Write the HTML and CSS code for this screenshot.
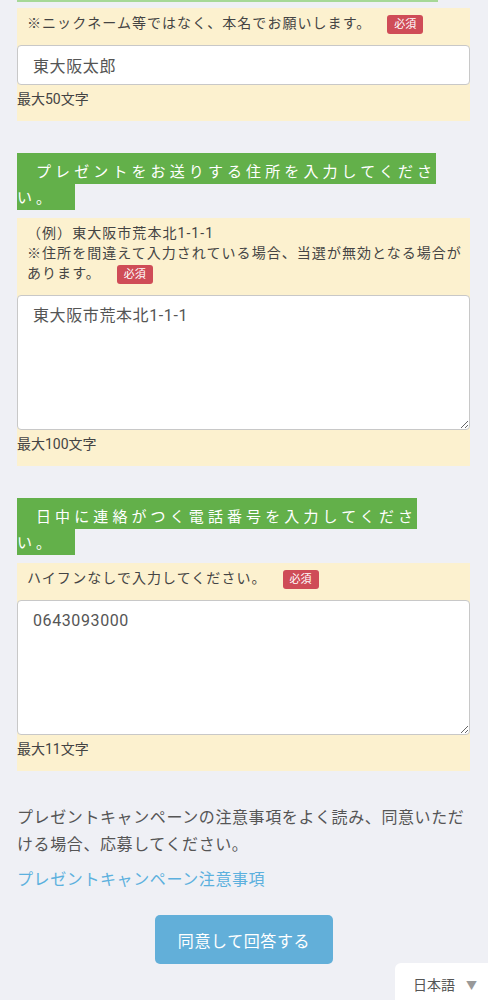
FILE: index.html
```html
<!DOCTYPE html>
<html lang="ja">
<head>
<meta charset="utf-8">
<title>応募フォーム</title>
<link rel="stylesheet" href="styles.css">
</head>
<body>
<div class="page">
  <div class="top-rule"></div>

  <div class="field">
    <p class="label">※ニックネーム等ではなく、本名でお願いします。<span class="badge">必須</span></p>
    <input class="input" type="text" value="東大阪太郎">
    <p class="hint">最大50文字</p>
  </div>

  <h2 class="heading"><span>プレゼントをお送りする住所を入力してください。</span></h2>
  <div class="field">
    <p class="label">（例）東大阪市荒本北1-1-1<br>※住所を間違えて入力されている場合、当選が無効となる場合があります。<span class="badge">必須</span></p>
    <textarea class="area">東大阪市荒本北1-1-1</textarea>
    <p class="hint">最大100文字</p>
  </div>

  <h2 class="heading"><span>日中に連絡がつく電話番号を入力してください。</span></h2>
  <div class="field">
    <p class="label">ハイフンなしで入力してください。<span class="badge">必須</span></p>
    <textarea class="area">0643093000</textarea>
    <p class="hint">最大11文字</p>
  </div>

  <p class="notice">プレゼントキャンペーンの注意事項をよく読み、同意いただける場合、応募してください。</p>
  <p class="link-row"><a class="link" href="#">プレゼントキャンペーン注意事項</a></p>
  <div class="actions"><button class="submit" type="button">同意して回答する</button></div>
</div>

<div class="lang">日本語<span class="caret">▼</span></div>
</body>
</html>
```

FILE: styles.css
```css
html, body {
  margin: 0;
  padding: 0;
  background: #eff0f5;
}
body {
  font-family: "Roboto", "Noto Sans CJK JP", sans-serif;
  color: #555;
}
.page {
  padding: 0 18px 60px 17px;
}
.top-rule {
  width: 421px;
  height: 2px;
  background: #a6d897;
  margin-bottom: 6px;
}
.field {
  background: #fcf1cf;
  padding-bottom: 12px;
}
.label {
  margin: 0;
  padding: 5px 2px 11px 10px;
  font-size: 14px;
  line-height: 20px;
  letter-spacing: 1.05px;
  color: #444;
}
.badge {
  display: inline-block;
  margin-left: 16px;
  padding: 0 7px;
  height: 19px;
  line-height: 19px;
  font-size: 11px;
  letter-spacing: 0;
  color: #fff;
  background: #cf4c57;
  border-radius: 3px;
  vertical-align: 0;
}
.input, .area {
  display: block;
  box-sizing: border-box;
  width: 100%;
  margin: 0;
  border: 1px solid #c8c8c8;
  border-radius: 4px;
  background: #fff;
  font-family: "Roboto", "Noto Sans CJK JP", sans-serif;
  font-size: 16px;
  letter-spacing: 0.6px;
  color: #555;
  padding: 0 15px;
}
.input {
  height: 40px;
}
.area {
  height: 135px;
  padding-top: 8px;
  line-height: 24px;
  resize: vertical;
}
.hint {
  margin: 4px 0 0;
  font-size: 14px;
  line-height: 20px;
  color: #444;
}
.heading {
  margin: 37px 0 8px;
  font-family: "Noto Sans CJK JP", sans-serif;
  font-size: 15px;
  font-weight: normal;
  line-height: 26px;
  letter-spacing: 4.1px;
  color: #fff;
}
.heading span {
  background: #63b04a;
  padding: 7px 20px 3px 19px;
}
.notice {
  margin: 33px 0 0;
  font-size: 16px;
  line-height: 27px;
  letter-spacing: 0.6px;
  color: #555;
}
.link-row {
  margin: 8px 0 0;
  font-size: 16px;
  line-height: 27px;
  letter-spacing: 0.6px;
}
.link {
  color: #5cb0de;
  text-decoration: none;
}
.actions {
  display: flex;
  justify-content: center;
  padding-left: 1px;
  margin-top: 22px;
}
.submit {
  width: 178px;
  height: 49px;
  border: none;
  border-radius: 5px;
  background: #62afd9;
  color: #fff;
  font-family: "Roboto", "Noto Sans CJK JP", sans-serif;
  font-size: 16px;
  letter-spacing: 0.6px;
}
.lang {
  position: fixed;
  right: 0;
  bottom: 0;
  width: 93px;
  height: 37px;
  box-sizing: border-box;
  padding: 12px 0 0 18px;
  background: #fff;
  border-top-left-radius: 6px;
  font-size: 14px;
  line-height: 20px;
  color: #555;
}
.caret {
  margin-left: 11px;
  font-size: 11px;
  color: #999;
}
```
